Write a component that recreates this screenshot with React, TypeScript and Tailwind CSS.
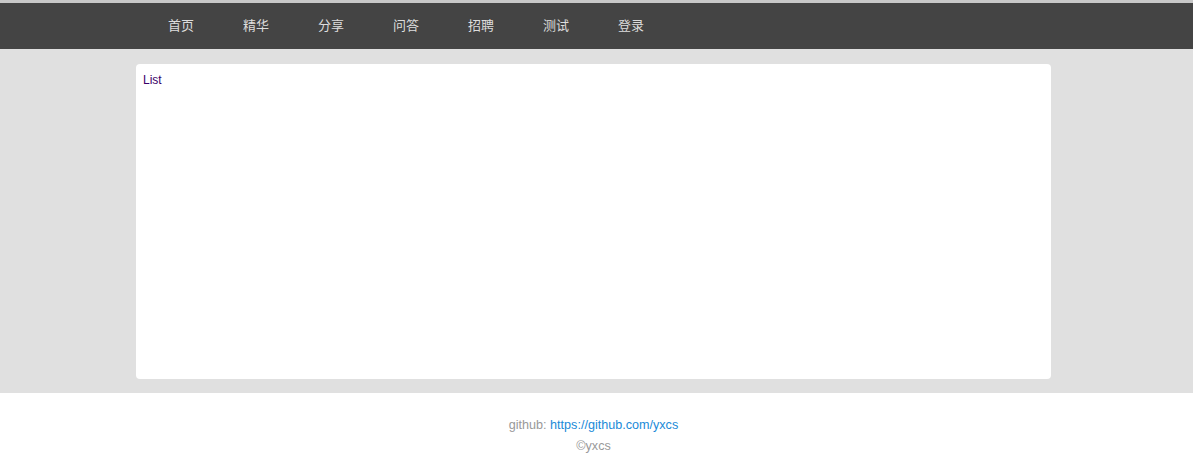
export default function App() {
  const navItems = ["首页", "精华", "分享", "问答", "招聘", "测试", "登录"]

  return (
    <div className="min-h-[473px] bg-white font-['Liberation_Sans','Noto_Sans_CJK_SC',sans-serif] text-[12px]">
      {/* Top strip */}
      <div className="h-[3px] bg-[#c8c8c8]" />

      {/* Header */}
      <header className="h-[46px] bg-[#444444]">
        <nav className="ml-[168px] flex h-full items-center">
          {navItems.map((item) => (
            <a
              key={item}
              href="#"
              className="w-[75px] text-[13px] text-[#dddddd]"
            >
              {item}
            </a>
          ))}
        </nav>
      </header>

      {/* Main */}
      <main className="bg-[#e0e0e0] pt-[15px] pb-[14px]">
        <div className="ml-[136px] h-[315px] w-[915px] rounded-[4px] bg-white px-[7px] py-[7px]">
          <a href="#" className="text-[12px] text-[#3a0068]">
            List
          </a>
        </div>
      </main>

      {/* Footer */}
      <footer className="pt-[22px] pr-[6px] text-center text-[12.6px] leading-[21px] text-[#999999]">
        <p>
          github:{" "}
          <a href="https://github.com/yxcs" className="text-[#1a8ad8]">
            https://github.com/yxcs
          </a>
        </p>
        <p>©yxcs</p>
      </footer>
    </div>
  )
}
